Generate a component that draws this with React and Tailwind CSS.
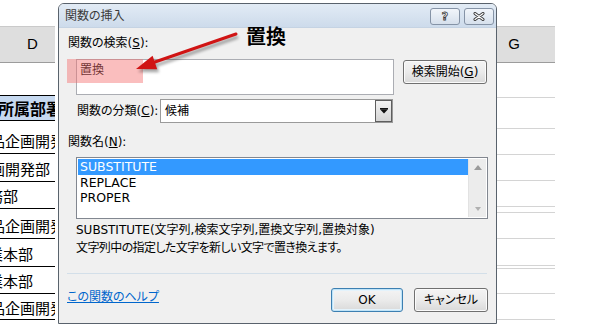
import React from "react";

const ui = "font-['DejaVu_Sans','Noto_Sans_CJK_JP',sans-serif] [font-feature-settings:'palt']";

function Btn({ children, className = "", primary = false }) {
  return (
    <div
      className={
        "flex items-center justify-center rounded-[3px] border bg-gradient-to-b from-[#f4f4f4] via-[#ebebeb] to-[#d9d9d9] text-[12px] text-black " +
        (primary
          ? "border-[#3c7fb1] shadow-[inset_0_0_0_1px_#bfe3f7,inset_0_0_0_2px_#e4f3fc] "
          : "border-[#707070] shadow-[inset_0_0_0_1px_#fbfbfb] ") +
        className
      }
    >
      {children}
    </div>
  );
}

function LeftRow({ h, text, ml, bold, blue, top }) {
  return (
    <div
      className={
        "overflow-hidden flex flex-col justify-end border-b border-black " +
        (blue ? "bg-[#c6d9f0] " : "bg-white ")
      }
      style={{ height: h }}
    >
      {text && (
        <div
          className={
            "whitespace-nowrap leading-none text-black font-['Noto_Sans_CJK_JP',sans-serif] " +
            (bold ? "font-bold text-[16px] " : "text-[15px] ")
          }
          style={{ marginLeft: ml, paddingBottom: top, width: 200 }}
        >
          {text}
        </div>
      )}
    </div>
  );
}

export default function App() {
  const leftRows = [
    { h: 33 },
    { h: 25, text: "所属部署", ml: -2, bold: true, blue: true, top: 4 },
    { h: 33, text: "商品企画開発部", ml: -25, top: 5 },
    { h: 28, text: "企画開発部", ml: -25, top: 5 },
    { h: 27, text: "総務部", ml: -27, top: 5 },
    { h: 30, text: "商品企画開発部", ml: -25, top: 5 },
    { h: 28, text: "営業本部", ml: -27, top: 5 },
    { h: 27, text: "営業本部", ml: -27, top: 5 },
    { h: 26, text: "商品企画開発部", ml: -25, top: 4 },
  ];
  const rightRows = [35, 31, 26, 26, 26, 6, 26, 27, 3, 25, 26];

  return (
    <div className="relative w-[601px] h-[325px] overflow-hidden bg-white">
      {/* spreadsheet background */}
      <div className="flex flex-col">
        <div className="h-[26px]" />
        <div className="flex h-[37px] font-['Liberation_Sans',sans-serif] text-[15px] text-black">
          <div className="w-[55px] bg-[#dedede] border-t border-[#cacaca] border-b border-b-[#9c9c9c] flex items-center justify-center pl-[10px]">
            D
          </div>
          <div className="w-[3px]" />
          <div className="w-[497px] bg-[#dedede] border-t border-[#cacaca] border-b border-b-[#9c9c9c] flex items-center justify-end pr-[35px]">
            G
          </div>
        </div>
        <div className="flex">
          <div className="w-[55px] flex flex-col">
            {leftRows.map((r, i) => (
              <LeftRow key={i} {...r} />
            ))}
          </div>
          <div className="w-[442px]" />
          <div className="w-[58px] flex flex-col">
            {rightRows.map((h, i) => (
              <div key={i} className="border-b border-[#d4d4d4]" style={{ height: h }} />
            ))}
          </div>
        </div>
      </div>

      {/* dialog window */}
      <div className={"absolute left-[58px] top-[3px] w-[439px] h-[321px] border border-[#59626c] rounded-t-[6px] overflow-hidden flex flex-col " + ui}>
        <div className="h-[24px] bg-gradient-to-b from-[#e2ebf5] to-[#cddbeb] border-b border-[#c5d3e3] flex items-center pl-[6px] pr-[2px]">
          <span className="text-[12px] text-[#3a3a3a]">関数の挿入</span>
          <div className="ml-auto flex gap-[4px] pt-[1px]">
            <div className="w-[30px] h-[17px] rounded-[3px] border border-[#8593a6] bg-gradient-to-b from-[#f1f5fa] to-[#d6e0ec] flex items-center justify-center">
              <span className="text-[11px] font-bold leading-none text-white [-webkit-text-stroke:0.8px_#3a3a3a]">?</span>
            </div>
            <div className="w-[30px] h-[17px] rounded-[3px] border border-[#8593a6] bg-gradient-to-b from-[#f1f5fa] to-[#d6e0ec] flex items-center justify-center">
              <svg width="12" height="9" viewBox="0 0 12 9">
                <path d="M2 1.5 L10 7.5 M10 1.5 L2 7.5" stroke="#3a3a3a" strokeWidth="3" strokeLinecap="round" />
                <path d="M2 1.5 L10 7.5 M10 1.5 L2 7.5" stroke="#ffffff" strokeWidth="1.2" strokeLinecap="round" />
              </svg>
            </div>
          </div>
        </div>

        <div className="flex-1 bg-[#f0f0f0] flex flex-col pl-[9px] pr-[8px] pt-[7px] text-[12px] text-black">
          <div className="h-[16px] leading-[16px]">
            関数の検索(<span className="underline">S</span>):
          </div>
          <div className="mt-[8px] flex items-start">
            <div className="ml-[8px] w-[318px] h-[36px] bg-white border border-[#abadb3] px-[3px] pt-[2px] leading-[16px]">
              置換
            </div>
            <Btn className="ml-[9px] mt-[1px] w-[84px] h-[24px]">
              検索開始(<span className="underline">G</span>)
            </Btn>
          </div>
          <div className="mt-[4px] flex items-center h-[24px]">
            <div className="ml-[9px] w-[83px] leading-[16px]">
              関数の分類(<span className="underline">C</span>):
            </div>
            <div className="w-[233px] h-[24px] bg-white border border-[#9a9a9a] flex items-center">
              <span className="pl-[4px] leading-[16px]">候補</span>
              <div className="ml-auto w-[17px] h-full border border-[#5e5e5e] bg-gradient-to-b from-[#f3f3f3] to-[#d5d5d5] flex items-center justify-center">
                <svg width="8" height="6" viewBox="0 0 8 6">
                  <rect x="0" y="0" width="8" height="1.3" fill="#111" />
                  <path d="M0 1.3 L8 1.3 L4 5.5 Z" fill="#111" />
                </svg>
              </div>
            </div>
          </div>
          <div className="mt-[11px] h-[16px] leading-[16px]">
            関数名(<span className="underline">N</span>):
          </div>
          <div className="mt-[7px] ml-[8px] w-[412px] h-[62px] bg-white border border-[#828790] flex p-[1px]">
            <div className="flex-1 flex flex-col text-[12.5px]">
              <div className="h-[16px] leading-[16px] bg-[#3399ff] text-white px-[2px]">SUBSTITUTE</div>
              <div className="h-[15px] leading-[15px] px-[2px]">REPLACE</div>
              <div className="h-[15px] leading-[15px] px-[2px]">PROPER</div>
            </div>
            <div className="w-[18px] bg-[#ececec] border-l border-[#e2e2e2] flex flex-col items-center justify-between py-[6px]">
              <svg width="8" height="5" viewBox="0 0 8 5">
                <path d="M0 5 L8 5 L4 0 Z" fill="#9a9a9a" />
              </svg>
              <svg width="6" height="4" viewBox="0 0 6 4">
                <path d="M0 0 L6 0 L3 4 Z" fill="#b0b0b0" />
              </svg>
            </div>
          </div>
          <div className="mt-[2px] ml-[8px] h-[18px] leading-[18px] whitespace-nowrap">
            SUBSTITUTE(文字列,検索文字列,置換文字列,置換対象)
          </div>
          <div className="ml-[8px] h-[18px] leading-[18px] whitespace-nowrap tracking-[-0.6px]">
            文字列中の指定した文字を新しい文字で置き換えます。
          </div>
          <div className="mt-[16px] ml-[-1px] w-[420px] h-px bg-[#d3dfe9]" />
          <div className="mt-[14px] flex items-start h-[24px]">
            <span className="ml-[-1px] mt-[1px] leading-[16px] text-[#0066cc] underline">この関数のヘルプ</span>
            <Btn primary className="ml-auto w-[72px] h-[24px]">OK</Btn>
            <Btn className="ml-[11px] w-[74px] h-[24px]">キャンセル</Btn>
          </div>
        </div>
      </div>

      {/* annotation: pink highlight */}
      <div className="absolute left-[67px] top-[59px] w-[76px] h-[24px] bg-[rgba(244,110,110,0.45)]" />

      {/* annotation: label */}
      <div className="absolute left-[246px] top-[25px] text-[20px] leading-[22px] font-bold text-black font-['Noto_Sans_CJK_JP',sans-serif]">
        置換
      </div>

      {/* annotation: red arrow */}
      <svg className="absolute left-0 top-0 pointer-events-none" width="601" height="325" viewBox="0 0 601 325">
        <defs>
          <filter id="blur" x="-20%" y="-20%" width="140%" height="140%">
            <feGaussianBlur stdDeviation="1.6" />
          </filter>
        </defs>
        <g filter="url(#blur)" opacity="0.35" transform="translate(2,3)">
          <line x1="236" y1="34" x2="152" y2="63" stroke="#000" strokeWidth="3" />
          <path d="M136 69 L157.2 69.2 L152.6 55.8 Z" fill="#000" />
        </g>
        <line x1="236" y1="34" x2="152" y2="63" stroke="#d01414" strokeWidth="3" strokeLinecap="round" />
        <path d="M136 69 L157.2 69.2 L152.6 55.8 Z" fill="#d01414" />
      </svg>
    </div>
  );
}
